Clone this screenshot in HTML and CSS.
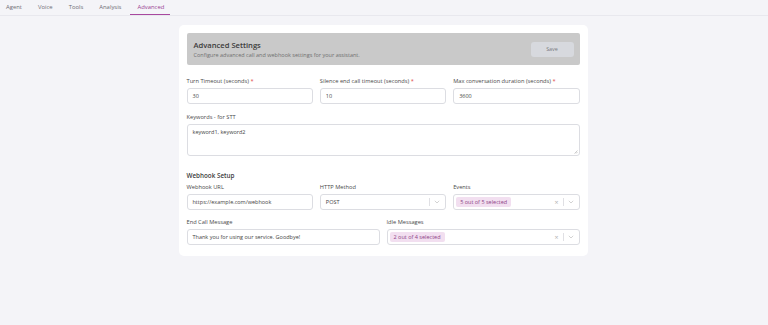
FILE: index.html
```html
<!DOCTYPE html>
<html>
<head>
<meta charset="utf-8">
<link rel="stylesheet" href="styles.css">
</head>
<body>
<nav class="tabs">
  <span class="tab">Agent</span>
  <span class="tab">Voice</span>
  <span class="tab">Tools</span>
  <span class="tab">Analysis</span>
  <span class="tab active">Advanced</span>
</nav>
<main class="wrap">
  <section class="card">
    <div class="head">
      <div>
        <h1>Advanced Settings</h1>
        <p>Configure advanced call and webhook settings for your assistant.</p>
      </div>
      <button class="save">Save</button>
    </div>

    <div class="grid3">
      <div class="field">
        <label>Turn Timeout (seconds) <span class="req">*</span></label>
        <div class="input">30</div>
      </div>
      <div class="field">
        <label>Silence end call timeout (seconds) <span class="req">*</span></label>
        <div class="input">10</div>
      </div>
      <div class="field">
        <label>Max conversation duration (seconds) <span class="req">*</span></label>
        <div class="input">3600</div>
      </div>
    </div>

    <div class="field kw">
      <label>Keywords - for STT</label>
      <div class="textarea">keyword1, keyword2
        <svg class="grip" width="4" height="4" viewBox="0 0 4 4"><path d="M0.5 3.5L3.5 0.5M2 3.5L3.5 2" stroke="#999" stroke-width="0.5"/></svg>
      </div>
    </div>

    <h2>Webhook Setup</h2>
    <div class="grid3 wh">
      <div class="field">
        <label>Webhook URL</label>
        <div class="input">https://example.com/webhook</div>
      </div>
      <div class="field">
        <label>HTTP Method</label>
        <div class="input select"><span class="val">POST</span><span class="ctl"><span class="sep"></span><svg width="6" height="4" viewBox="0 0 6 4"><path d="M0.8 0.8L3 3L5.2 0.8" fill="none" stroke="#b5b5b5" stroke-width="0.6"/></svg></span></div>
      </div>
      <div class="field">
        <label>Events</label>
        <div class="input select"><span class="chip">5 out of 5 selected</span><span class="ctl"><span class="x">×</span><span class="sep"></span><svg width="6" height="4" viewBox="0 0 6 4"><path d="M0.8 0.8L3 3L5.2 0.8" fill="none" stroke="#b5b5b5" stroke-width="0.6"/></svg></span></div>
      </div>
    </div>

    <div class="grid2">
      <div class="field">
        <label>End Call Message</label>
        <div class="input">Thank you for using our service. Goodbye!</div>
      </div>
      <div class="field">
        <label>Idle Messages</label>
        <div class="input select"><span class="chip">2 out of 4 selected</span><span class="ctl"><span class="x">×</span><span class="sep"></span><svg width="6" height="4" viewBox="0 0 6 4"><path d="M0.8 0.8L3 3L5.2 0.8" fill="none" stroke="#b5b5b5" stroke-width="0.6"/></svg></span></div>
      </div>
    </div>
  </section>
</main>
</body>
</html>
```

FILE: styles.css
```css
* { box-sizing: border-box; }
html, body { margin: 0; height: 100%; }
body {
  background: #f4f4f8;
  font-family: "Open Sans", "Lato", sans-serif;
  color: #3a3a3a;
  font-size: 5.7px;
}
.tabs {
  display: flex;
  height: 16px;
  border-bottom: 1px solid #e8e8ee;
  padding-left: 6px;
}
.tab {
  font-size: 5.9px;
  color: #6e6e75;
  padding: 4px 0 0;
  margin-right: 16px;
  line-height: 7px;
}
.tab.active {
  color: #9b3f93;
  border-bottom: 1px solid #a8489f;
  padding: 4px 6px 0 7px;
  margin-left: -7px;
  height: 15px;
}
.wrap {
  display: flex;
  justify-content: center;
  padding-top: 9px;
  padding-right: 2px;
}
.card {
  width: 409px;
  background: #fff;
  border-radius: 5px;
  padding: 8px 8px 11px;
}
.head {
  background: #c9c9c9;
  border-radius: 2px;
  height: 32px;
  display: flex;
  align-items: center;
  justify-content: space-between;
  padding: 0 6px 0 7px;
}
h1 {
  margin: 0;
  font-size: 7.6px;
  font-weight: 600;
  color: #3c3c3c;
  line-height: 9px;
}
.head p {
  margin: 2px 0 0;
  font-size: 5.5px;
  color: #707070;
  line-height: 6px;
}
.save {
  width: 43px;
  height: 15px;
  border: none;
  border-radius: 3px;
  background: #d7d9de;
  color: #7a7a80;
  font-family: inherit;
  font-size: 5.4px;
}
.grid3 {
  display: grid;
  grid-template-columns: 1fr 1fr 1fr;
  gap: 7px;
  margin-top: 13px;
}
.grid2 {
  display: grid;
  grid-template-columns: 193px 1fr;
  gap: 7px;
  margin-top: 9px;
}
.field label {
  display: block;
  font-size: 5.7px;
  color: #4a4a4a;
  line-height: 7px;
  margin-bottom: 3px;
}
.req { color: #e04848; }
.input {
  height: 16px;
  border: 1px solid #dcdde2;
  border-radius: 3px;
  display: flex;
  align-items: center;
  padding: 0 5px;
  font-size: 5.5px;
  color: #444;
}
.kw { margin-top: 10px; }
.textarea {
  position: relative;
  height: 32px;
  border: 1px solid #dcdde2;
  border-radius: 3px;
  padding: 4px 5px;
  font-size: 5.5px;
  color: #444;
  line-height: 7px;
}
.grip { position: absolute; right: 1px; bottom: 1px; }
h2 {
  margin: 16px 0 0;
  font-size: 6.3px;
  font-weight: 600;
  color: #3c3c3c;
  line-height: 8px;
}
.grid3.wh { margin-top: 4px; }
.select { justify-content: space-between; }
.ctl { display: flex; align-items: center; gap: 4px; color: #b0b0b0; }
.sep { width: 1px; height: 8px; background: #e0e0e4; }
.x { font-size: 7px; line-height: 7px; color: #b5b5b5; }
.chip {
  background: #f2dff0;
  color: #8d3f86;
  border-radius: 2px;
  padding: 2px 4px;
  margin-left: -3px;
  font-size: 5.5px;
  line-height: 6px;
}
```
